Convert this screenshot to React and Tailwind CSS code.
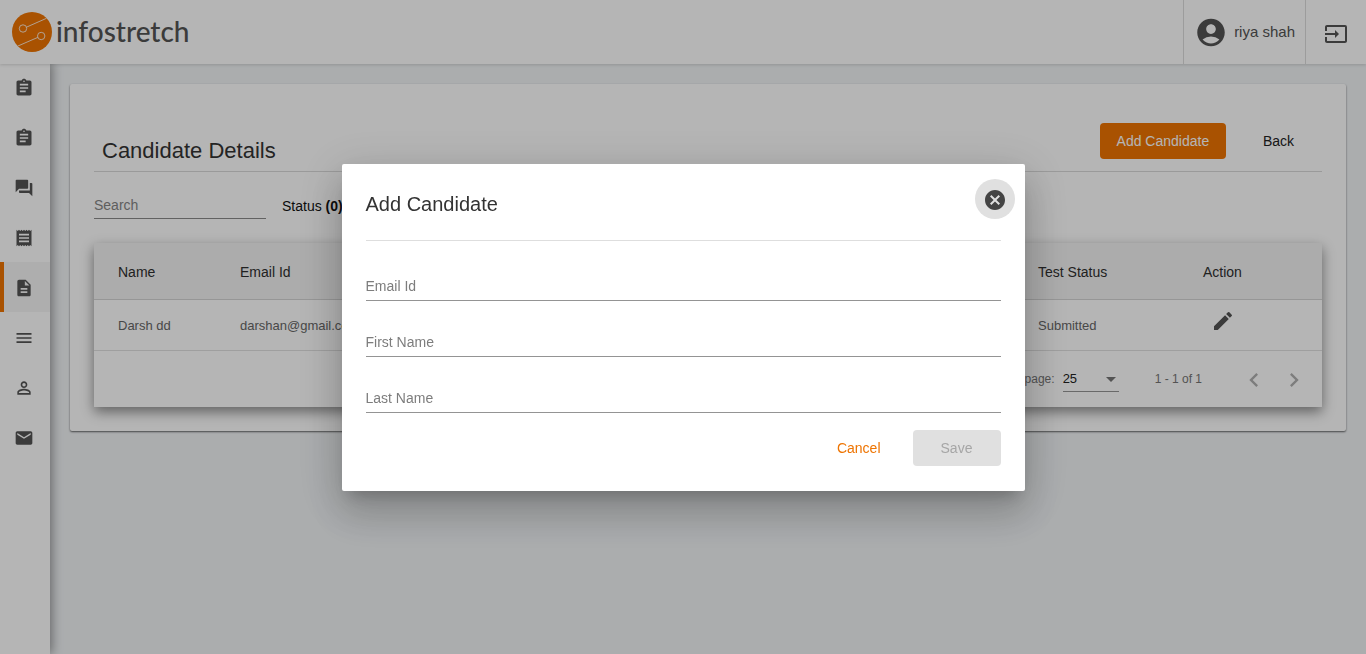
import React from "react";
import {
  MdAccountCircle,
  MdArrowDropDown,
  MdAssignment,
  MdCancel,
  MdChevronLeft,
  MdChevronRight,
  MdDescription,
  MdEdit,
  MdEmail,
  MdInput,
  MdMenu,
  MdPersonOutline,
  MdQuestionAnswer,
  MdReceipt,
} from "react-icons/md";

const navItems = [
  { label: "Tests", Icon: MdAssignment },
  { label: "Assignments", Icon: MdAssignment },
  { label: "Questions", Icon: MdQuestionAnswer },
  { label: "Reports", Icon: MdReceipt },
  { label: "Candidates", Icon: MdDescription, active: true },
  { label: "Categories", Icon: MdMenu },
  { label: "Users", Icon: MdPersonOutline },
  { label: "Mail", Icon: MdEmail },
];

const candidates = [
  { name: "Darsh dd", email: "darshan@gmail.com", status: "Submitted" },
];

const fields = [
  { id: "email", label: "Email Id", type: "email" },
  { id: "first-name", label: "First Name", type: "text" },
  { id: "last-name", label: "Last Name", type: "text" },
];

function Logo() {
  return (
    <a href="#home" className="flex items-center gap-1 pl-3 text-[#545454]">
      <svg width="40" height="40" viewBox="0 0 40 40" aria-hidden="true">
        <circle cx="20" cy="20" r="20" fill="#ee7402" />
        <g fill="none" stroke="#fff" strokeWidth="0.8">
          <circle cx="11" cy="16.5" r="3.7" />
          <path d="M14.4 15.2 34.5 6.3" />
          <circle cx="29.2" cy="24" r="3.7" />
          <path d="M25.8 25.4 5.5 34.2" />
        </g>
      </svg>
      <span className="pb-0.5 font-['Lato',sans-serif] text-[28px] leading-10 font-medium">
        infostretch
      </span>
    </a>
  );
}

function Header() {
  return (
    <header className="relative z-10 flex h-16 items-stretch bg-white shadow-[0_1px_3px_rgba(0,0,0,0.15)]">
      <Logo />
      <div className="ml-auto flex">
        <button className="flex items-center gap-1.5 border-x border-[#dcdcdc] pr-2.5 pl-[10px] text-[15px] text-[#545454]">
          <MdAccountCircle size={34} className="pt-px" />
          riya shah
        </button>
        <button aria-label="Log out" className="flex w-15 items-center justify-center pt-1 text-[#545454]">
          <MdInput size={24} />
        </button>
      </div>
    </header>
  );
}

function Sidebar() {
  return (
    <nav className="-mt-0.5 flex w-[50px] shrink-0 flex-col bg-white shadow-[2px_0_10px_rgba(0,0,0,0.4)]">
      {navItems.map(({ label, Icon, active }) => (
        <a
          key={label}
          href="#nav"
          aria-label={label}
          className={
            active
              ? "flex h-[50px] items-center border-l-4 border-[#ee7402] bg-[#f5f5f5] pt-0.5 pl-2.5 text-[#545454]"
              : "flex h-[50px] items-center border-l-4 border-transparent pt-0.5 pl-2.5 text-[#545454]"
          }
        >
          <Icon size={20} />
        </a>
      ))}
    </nav>
  );
}

function CandidateTable() {
  return (
    <div className="mt-6 bg-white shadow-[0_5px_12px_rgba(0,0,0,0.45)]">
      <table className="w-full table-fixed text-left">
        <colgroup>
          <col className="w-[146px]" />
          <col />
          <col className="w-[165px]" />
          <col className="w-[119px]" />
        </colgroup>
        <thead>
          <tr className="h-14 border-b border-[#d4d4d4] bg-[#f2f2f2] text-sm text-[#2f2f2f]">
            <th className="pt-0.5 pl-6 font-normal">Name</th>
            <th className="pt-0.5 font-normal">Email Id</th>
            <th className="pt-0.5 font-normal">Test Status</th>
            <th className="pt-0.5 font-normal">Action</th>
          </tr>
        </thead>
        <tbody>
          {candidates.map((c) => (
            <tr key={c.email} className="h-[51px] border-b border-[#e0e0e0] text-[13px] text-[#666]">
              <td className="pt-0.5 pl-6">{c.name}</td>
              <td className="pt-0.5">{c.email}</td>
              <td className="pt-0.5">{c.status}</td>
              <td className="pb-2 pl-2">
                <button aria-label="Edit candidate" className="block text-[#545454]">
                  <MdEdit size={24} />
                </button>
              </td>
            </tr>
          ))}
        </tbody>
      </table>
      <div className="flex h-14 items-center justify-end pr-2 text-xs text-[#757575]">
        <label htmlFor="page-size" className="mr-2">Items per page:</label>
        <div className="relative flex h-[26px] w-14 items-center border-b border-[#949494] pt-0.5 text-[#222]">
          <select id="page-size" defaultValue="25" className="w-full appearance-none bg-transparent text-[13px]">
            <option>25</option>
            <option>50</option>
          </select>
          <MdArrowDropDown size={24} className="pointer-events-none absolute -right-1 text-[#757575]" />
        </div>
        <span className="mr-8 ml-9">1 - 1 of 1</span>
        <button aria-label="Previous page" className="flex size-10 items-center justify-center pt-0.5 text-[#b0b0b0]">
          <MdChevronLeft size={28} />
        </button>
        <button aria-label="Next page" className="flex size-10 items-center justify-center pt-0.5 text-[#b0b0b0]">
          <MdChevronRight size={28} />
        </button>
      </div>
    </div>
  );
}

function CandidatePanel() {
  return (
    <main className="min-w-0 flex-1 p-5">
      <section className="rounded-xs bg-white px-6 pt-9 pb-6 shadow-[0_1px_2px_rgba(0,0,0,0.6)]">
        <div className="flex h-[52px] items-start justify-between border-b border-[#dadada]">
          <h1 className="pt-[15px] pl-2 text-[22px] leading-8 text-[#333]">Candidate Details</h1>
          <div className="flex gap-5 pt-[3px] text-sm">
            <button className="h-9 w-[126px] rounded bg-[#ee7402] text-white">Add Candidate</button>
            <button className="h-9 pr-7 pl-[17px] text-[#222]">Back</button>
          </div>
        </div>
        <div className="mt-6 flex items-start gap-4 text-sm">
          <input
            aria-label="Search"
            placeholder="Search"
            className="h-[23px] w-[172px] border-b border-[#8a8a8a] pb-1 placeholder:text-[#858585]"
          />
          <button className="text-[#111]">
            Status <b>(0)</b>
          </button>
        </div>
        <CandidateTable />
      </section>
    </main>
  );
}

function AddCandidateDialog() {
  return (
    <div className="fixed inset-0 z-20 flex items-center justify-center bg-black/[0.29]">
      <div
        role="dialog"
        aria-labelledby="dialog-title"
        className="relative h-1/2 w-1/2 rounded-xs bg-white p-6 shadow-[0_11px_15px_-7px_rgba(0,0,0,0.2),0_24px_38px_3px_rgba(0,0,0,0.14),0_9px_46px_8px_rgba(0,0,0,0.12)]"
      >
        <h2 id="dialog-title" className="h-[53px] border-b border-[#dedede] text-xl leading-8 text-[#333]">
          Add Candidate
        </h2>
        <button
          aria-label="Close"
          className="absolute top-[15px] right-2.5 flex size-10 items-center justify-center rounded-full bg-[#e0e0e0] pt-0.5 text-[#444]"
        >
          <MdCancel size={24} />
        </button>
        <form className="flex flex-col pt-7">
          {fields.map(({ id, label, type }) => (
            <input
              key={id}
              id={id}
              type={type}
              aria-label={label}
              placeholder={label}
              className="mb-6 h-8 w-full border-b border-[#949494] pt-1 text-sm outline-none placeholder:text-[#7d7d7d]"
            />
          ))}
          <div className="-mt-[7px] flex justify-end gap-4 text-sm">
            <button type="button" className="h-9 px-4 text-[#ee7402]">Cancel</button>
            <button type="submit" disabled className="h-9 w-[88px] rounded bg-[#e0e0e0] text-[#a6a6a6]">
              Save
            </button>
          </div>
        </form>
      </div>
    </div>
  );
}

export default function App() {
  return (
    <div className="flex min-h-screen flex-col bg-[#f1f4f6] font-['Liberation_Sans',Arial,sans-serif]">
      <Header />
      <div className="flex flex-1">
        <Sidebar />
        <CandidatePanel />
      </div>
      <AddCandidateDialog />
    </div>
  );
}
